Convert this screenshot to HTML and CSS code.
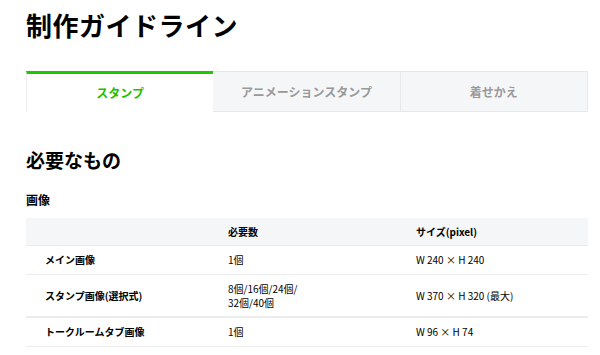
FILE: index.html
```html
<!DOCTYPE html>
<html lang="ja">
<head>
  <meta charset="utf-8">
  <title>制作ガイドライン</title>
  <link rel="stylesheet" href="styles.css">
</head>
<body>
<div class="page">
  <h1 class="title">制作ガイドライン</h1>

  <!-- tabs -->
  <ul class="tabs">
    <li class="tab active">スタンプ</li>
    <li class="tab">アニメーションスタンプ</li>
    <li class="tab">着せかえ</li>
  </ul>

  <h2 class="section">必要なもの</h2>
  <h3 class="sub">画像</h3>

  <table class="spec">
    <thead>
      <tr><th></th><th>必要数</th><th>サイズ(pixel)</th></tr>
    </thead>
    <tbody>
      <tr><td class="name">メイン画像</td><td>1個</td><td>W 240 × H 240</td></tr>
      <tr class="tall"><td class="name">スタンプ画像(選択式)</td><td>8個/16個/24個/<br>32個/40個</td><td>W 370 × H 320 (最大)</td></tr>
      <tr><td class="name">トークルームタブ画像</td><td>1個</td><td>W 96 × H 74</td></tr>
    </tbody>
  </table>
</div>
</body>
</html>
```

FILE: styles.css
```css
body {
  margin: 0;
  background: #fff;
  color: #000;
  font-family: "Noto Sans CJK JP", "Noto Sans", sans-serif;
}

h1, h2, h3 {
  margin: 0;
}

.page {
  width: 562px;
  padding: 0 0 0 26px;
}

.title {
  font-size: 26px;
  font-weight: bold;
  line-height: 36px;
  padding-top: 7px;
  letter-spacing: 0.5px;
}

.tabs {
  display: flex;
  list-style: none;
  margin: 28px 0 0;
  padding: 0;
}
.tab {
  flex: 1;
  height: 39px;
  line-height: 39px;
  text-align: center;
  font-size: 12px;
  font-weight: bold;
  color: #999;
  background: #f5f6f7;
  border: 1px solid #e8e8e8;
  border-left: none;
}
.tab.active {
  color: #1dc100;
  background: #fff;
  border: none;
  border-top: 3px solid #1ec800;
  border-left: 1px solid #ececec;
  height: 38px;
  line-height: 38px;
}

.section {
  font-size: 19px;
  font-weight: bold;
  line-height: 26px;
  margin-top: 35px;
}

.sub {
  font-size: 12px;
  font-weight: bold;
  line-height: 16px;
  margin-top: 19px;
}

.spec {
  width: 562px;
  margin-top: 10px;
  border-collapse: collapse;
  font-size: 10px;
  line-height: 14px;
}
.spec th, .spec td {
  text-align: left;
  padding: 0;
  border-bottom: 1px solid #ececec;
}
.spec th {
  background: #f5f6f7;
  font-weight: bold;
  height: 27px;
}
.spec td {
  height: 28px;
}
.spec tr.tall td {
  height: 41px;
  border-bottom-width: 2px;
}
.spec th:first-child, .spec td:first-child {
  width: 183px;
  padding-left: 19px;
}
.spec th:nth-child(2), .spec td:nth-child(2) {
  width: 188px;
}
.spec td.name {
  font-weight: bold;
}
```
